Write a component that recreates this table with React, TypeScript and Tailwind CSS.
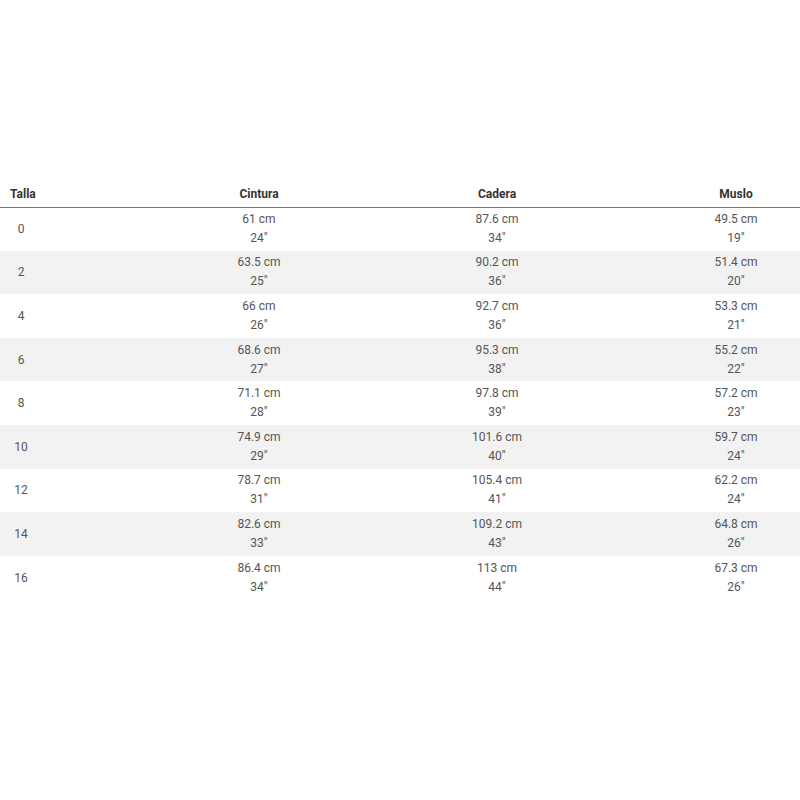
import React from 'react';

interface SizeRow {
  talla: string;
  cintura: [string, string];
  cadera: [string, string];
  muslo: [string, string];
}

const rows: SizeRow[] = [
  { talla: '0', cintura: ['61 cm', '24"'], cadera: ['87.6 cm', '34"'], muslo: ['49.5 cm', '19"'] },
  { talla: '2', cintura: ['63.5 cm', '25"'], cadera: ['90.2 cm', '36"'], muslo: ['51.4 cm', '20"'] },
  { talla: '4', cintura: ['66 cm', '26"'], cadera: ['92.7 cm', '36"'], muslo: ['53.3 cm', '21"'] },
  { talla: '6', cintura: ['68.6 cm', '27"'], cadera: ['95.3 cm', '38"'], muslo: ['55.2 cm', '22"'] },
  { talla: '8', cintura: ['71.1 cm', '28"'], cadera: ['97.8 cm', '39"'], muslo: ['57.2 cm', '23"'] },
  { talla: '10', cintura: ['74.9 cm', '29"'], cadera: ['101.6 cm', '40"'], muslo: ['59.7 cm', '24"'] },
  { talla: '12', cintura: ['78.7 cm', '31"'], cadera: ['105.4 cm', '41"'], muslo: ['62.2 cm', '24"'] },
  { talla: '14', cintura: ['82.6 cm', '33"'], cadera: ['109.2 cm', '43"'], muslo: ['64.8 cm', '26"'] },
  { talla: '16', cintura: ['86.4 cm', '34"'], cadera: ['113 cm', '44"'], muslo: ['67.3 cm', '26"'] },
];

const Measure: React.FC<{ value: [string, string] }> = ({ value }) => (
  <td className="text-center align-middle leading-[19px]">
    <div>{value[0]}</div>
    <div>{value[1]}</div>
  </td>
);

const App: React.FC = () => {
  return (
    <div
      className="w-[800px] h-[800px] bg-white overflow-hidden pt-[178px]"
      style={{ fontFamily: 'Roboto, "Liberation Sans", sans-serif' }}
    >
      <table className="w-[856px] table-fixed border-collapse text-[12px] text-[#555]">
        <colgroup>
          <col className="w-[140px]" />
          <col className="w-[238px]" />
          <col className="w-[238px]" />
          <col className="w-[240px]" />
        </colgroup>
        <thead>
          <tr className="h-[29px] border-b border-[#777] text-[#333] font-bold">
            <th className="text-left align-middle pl-[10px] pt-[4px]">Talla</th>
            <th className="text-center align-middle pt-[4px]">Cintura</th>
            <th className="text-center align-middle pt-[4px]">Cadera</th>
            <th className="text-center align-middle pt-[4px]">Muslo</th>
          </tr>
        </thead>
        <tbody>
          {rows.map((row, i) => (
            <tr key={row.talla} className={i % 2 === 1 ? 'h-[43.6px] bg-[#f2f2f2]' : 'h-[43.6px] bg-white'}>
              <td className="align-middle">
                <div className="w-[42px] text-center">{row.talla}</div>
              </td>
              <Measure value={row.cintura} />
              <Measure value={row.cadera} />
              <Measure value={row.muslo} />
            </tr>
          ))}
        </tbody>
      </table>
    </div>
  );
};

export default App;
